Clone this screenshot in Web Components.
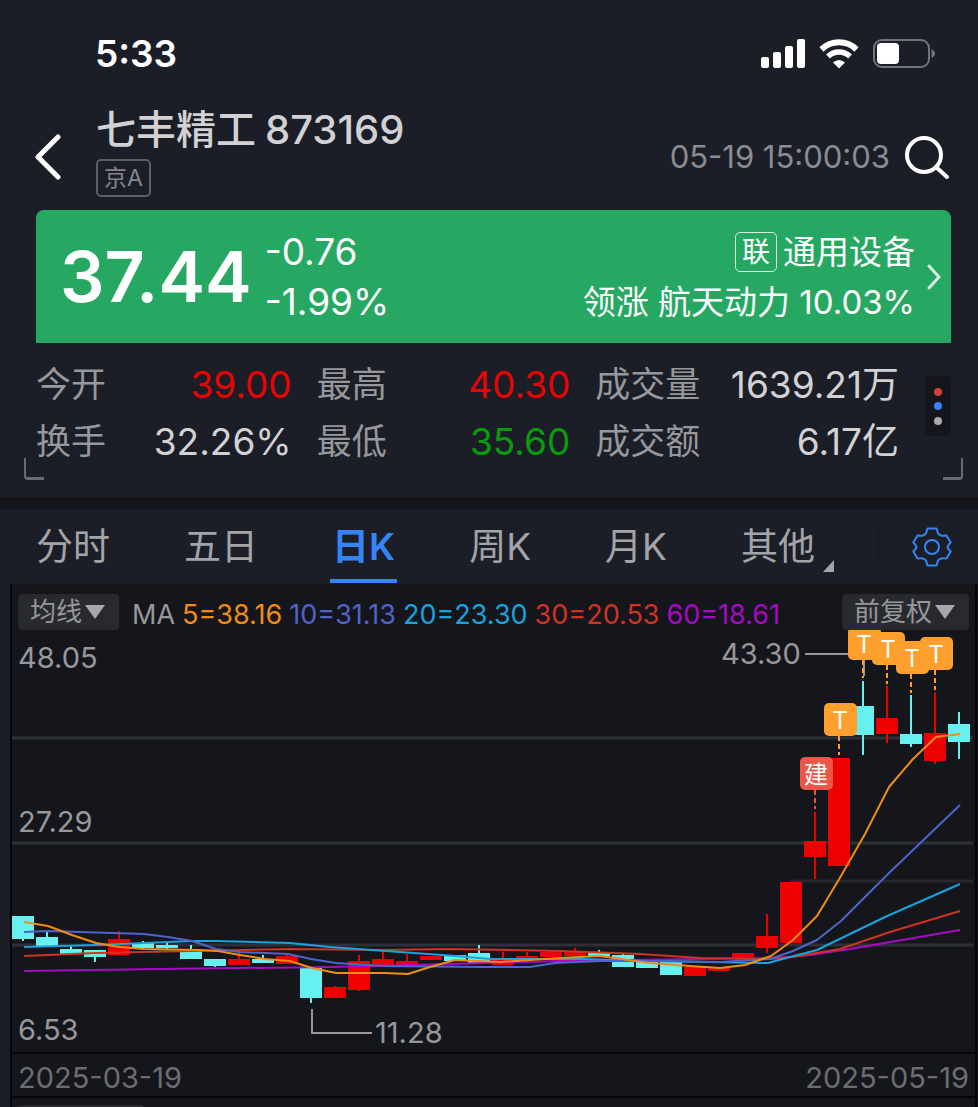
<!DOCTYPE html>
<html lang="zh-CN">
<head>
<meta charset="utf-8">
<meta name="viewport" content="width=device-width, initial-scale=1">
<title>七丰精工 873169</title>
<style>
  html, body {
    margin: 0;
    background: #15161b;
  }

  body {
    --panel: #1b1e27;
    --ink: #15161b;
    --text: #d2d2d5;
    --muted: #97989c;
    --blue: #3485f7;
    color: var(--text);
    font-family: Inter, "Noto Sans CJK SC", sans-serif;
  }
</style>
</head>
<body>

<stock-page>
  <status-bar slot="top" time="5:33"></status-bar>
  <stock-header slot="top" name="七丰精工" code="873169" market="京A" time="05-19 15:00:03"></stock-header>
  <quote-card slot="top" price="37.44" change="-0.76" percent="-1.99%">
    <span slot="sector">通用设备</span>
    <span slot="leader">领涨 航天动力 10.03%</span>
  </quote-card>
  <quote-stats slot="top"></quote-stats>
  <period-tabs></period-tabs>
  <kline-panel></kline-panel>
</stock-page>

<script>
  class StockPage extends HTMLElement {
    constructor() {
      super();
      this.attachShadow({ mode: "open" });
      this.shadowRoot.innerHTML = `
        <style>
        :host{
            display:block;
            overflow:hidden;
        }

        .summary{
            position:relative;
            background:var(--panel);
            padding-bottom:27px;
            margin-bottom:12px;
        }

        /* corner marks over the bottom of the summary */
        .corner{
            position:absolute;
            bottom:17px;
            width:18px;
            height:19px;
            border-bottom:3px solid #6a6b70;
        }

        .corner.left{
            left:24px;
            border-left:2px solid #6a6b70;
            border-bottom-left-radius:4px;
        }

        .corner.right{
            right:15px;
            border-right:2px solid #6a6b70;
            border-bottom-right-radius:4px;
        }
        </style>

        <header class="summary">
            <slot name="top"></slot>
            <span class="corner left"></span>
            <span class="corner right"></span>
        </header>
        <main><slot></slot></main>
      `;
    }
  }

  class StatusBar extends HTMLElement {
    constructor() {
      super();
      this.attachShadow({ mode: "open" });
      this.shadowRoot.innerHTML = `
        <style>
        :host{
            display:flex;
            align-items:center;
            gap:13px;
            padding:30px 42px 0 95px;
            height:48px;
            color:#fff;
        }

        time{
            flex:1;
            font-size:37px;
            line-height:48px;
            font-weight:600;
        }

        svg{
            display:block;
        }
        </style>

        <time></time>
        <svg width="46" height="30" viewBox="0 0 46 30" fill="#fff">
            <rect x="1" y="18" width="8" height="11" rx="2"/>
            <rect x="13" y="13" width="8" height="16" rx="2"/>
            <rect x="25" y="7" width="8" height="22" rx="2"/>
            <rect x="37" y="0" width="8" height="29" rx="2"/>
        </svg>
        <svg width="40" height="30" viewBox="0 0 40 30">
            <path d="M2.500 10.500A25 25 0 0 1 37.500 10.500" fill="none" stroke="#fff" stroke-width="6"/>
            <path d="M9 17.500A16 16 0 0 1 31 17.500" fill="none" stroke="#fff" stroke-width="5.500"/>
            <path d="M20 29.500L14 23.500Q20 18.500 26 23.500Z" fill="#fff"/>
        </svg>
        <svg width="64" height="30" viewBox="0 0 64 30">
            <rect x="2" y="1" width="55" height="27" rx="8" fill="none" stroke="#73747b" stroke-width="2"/>
            <rect x="5" y="4" width="22" height="21" rx="4" fill="#fff"/>
            <path d="M59.500 10Q63 12 63 14.500T59.500 19Z" fill="#73747b"/>
        </svg>
      `;
    }

    connectedCallback() {
      this.shadowRoot.querySelector("time").textContent = this.getAttribute("time");
    }
  }

  class StockHeader extends HTMLElement {
    constructor() {
      super();
      this.attachShadow({ mode: "open" });
      this.shadowRoot.innerHTML = `
        <style>
        :host{
            display:flex;
            align-items:center;
            padding:28px 28px 13px 34px;
        }

        button{
            display:block;
            padding:0;
            border:0;
            background:none;
        }

        button, time{
            margin-top:11px;
        }

        svg{
            display:block;
        }

        .names{
            flex:1;
            padding-left:34px;
        }

        h1{
            display:flex;
            gap:9px;
            margin:0;
            font-size:40px;
            line-height:48px;
            font-weight:500;
        }

        .market{
            display:inline-block;
            margin-top:5px;
            padding:0 6px;
            border:2px solid #5d5f66;
            border-radius:5px;
            color:#85868c;
            font-size:23px;
            line-height:34px;
            vertical-align:top;
        }

        time{
            padding-right:14px;
            color:#8b8c91;
            font-size:31px;
            line-height:40px;
        }
        </style>

        <button aria-label="返回">
            <svg width="28" height="46" viewBox="0 0 28 46"><path d="M24 3L4 23L24 43" fill="none" stroke="#fff" stroke-width="5" stroke-linecap="round" stroke-linejoin="round"/></svg>
        </button>
        <div class="names">
            <h1><span id="name"></span><span id="code"></span></h1>
            <span class="market"></span>
        </div>
        <time></time>
        <button aria-label="搜索">
            <svg width="46" height="46" viewBox="0 0 46 46" fill="none" stroke="#fff"><circle cx="20" cy="21" r="17" stroke-width="4"/><path d="M32 33L43 43" stroke-width="4" stroke-linecap="round"/></svg>
        </button>
      `;
    }

    connectedCallback() {
      const root = this.shadowRoot;
      root.getElementById("name").textContent = this.getAttribute("name");
      root.getElementById("code").textContent = this.getAttribute("code");
      root.querySelector(".market").textContent = this.getAttribute("market");
      root.querySelector("time").textContent = this.getAttribute("time");
    }
  }

  class QuoteCard extends HTMLElement {
    constructor() {
      super();
      this.attachShadow({ mode: "open" });
      this.shadowRoot.innerHTML = `
        <style>
        :host{
            display:flex;
            align-items:center;
            margin:0 27px 0 36px;
            padding:17px 10px 16px 24px;
            border-radius:8px 8px 0 0;
            background:#27a862;
            color:#fff;
        }

        .price{
            font-size:70px;
            line-height:100px;
            font-weight:600;
        }

        .change{
            flex:1;
            padding-left:13px;
            font-size:37px;
            line-height:50px;
        }

        .sector{
            font-size:33px;
            line-height:50px;
            text-align:right;
        }

        .first{
            display:flex;
            justify-content:flex-end;
            align-items:center;
            gap:6px;
        }

        .tag{
            padding:0 6px;
            border:1px solid #d5f0e0;
            border-radius:5px;
            font-size:28px;
            line-height:38px;
        }

        svg{
            display:block;
            padding-left:12px;
        }
        </style>

        <div class="price"></div>
        <div class="change"><div id="change"></div><div id="percent"></div></div>
        <div class="sector">
            <div class="first"><span class="tag">联</span><slot name="sector"></slot></div>
            <slot name="leader"></slot>
        </div>
        <svg width="14" height="26" viewBox="0 0 14 26"><path d="M2 2L12 13L2 24" fill="none" stroke="#d5f0e0" stroke-width="3" stroke-linecap="round"/></svg>
      `;
    }

    connectedCallback() {
      const root = this.shadowRoot;
      root.querySelector(".price").textContent = this.getAttribute("price");
      root.getElementById("change").textContent = this.getAttribute("change");
      root.getElementById("percent").textContent = this.getAttribute("percent");
    }
  }

  class QuoteStats extends HTMLElement {
    constructor() {
      super();
      this._items = [
        ["今开", "39.00", "up"],
        ["最高", "40.30", "up"],
        ["成交量", "1639.21万", ""],
        ["换手", "32.26%", ""],
        ["最低", "35.60", "down"],
        ["成交额", "6.17亿", ""],
      ];
      this.attachShadow({ mode: "open" });
      this.shadowRoot.innerHTML = `
        <style>
        :host{
            display:flex;
            align-items:flex-start;
            gap:26px;
            padding:13px 27px 0 36px;
        }

        dl{
            flex:1;
            display:grid;
            grid-template-columns:256fr 254fr 304fr;
            column-gap:25px;
            margin:0;
        }

        dl div{
            display:flex;
            justify-content:space-between;
            line-height:57px;
        }

        dt{
            color:var(--muted);
            font-size:35px;
        }

        dd{
            margin:0;
            font-size:37px;
        }

        .up{
            color:#e60505;
        }

        .down{
            color:#0a9b0d;
        }

        button{
            display:block;
            margin-top:20px;
            padding:0;
            border:0;
            border-radius:5px;
            background:#15161b;
        }

        svg{
            display:block;
        }
        </style>

        <dl></dl>
        <button aria-label="更多">
            <svg width="26" height="60" viewBox="0 0 26 60">
                <circle cx="13" cy="16" r="4" fill="#d14433"/>
                <circle cx="13" cy="30" r="4" fill="#3485f7"/>
                <circle cx="13" cy="45" r="4" fill="#aaaaae"/>
            </svg>
        </button>
      `;
    }

    connectedCallback() {
      this.shadowRoot.querySelector("dl").innerHTML = this._items
        .map(([label, value, cls]) => `<div><dt>${label}</dt><dd class="${cls}">${value}</dd></div>`)
        .join("");
    }
  }

  class PeriodTabs extends HTMLElement {
    constructor() {
      super();
      this.attachShadow({ mode: "open" });
      this.shadowRoot.innerHTML = `
        <style>
        :host{
            display:flex;
            align-items:center;
            padding:0 26px 0 36px;
            background:var(--panel);
        }

        nav{
            flex:1;
            display:flex;
            justify-content:space-between;
        }

        button{
            position:relative;
            display:block;
            padding:0;
            border:0;
            background:none;
            color:#a3a4a8;
            font:inherit;
            font-size:37px;
            line-height:75px;
        }

        button.active{
            color:var(--blue);
            font-weight:600;
        }

        /* underline of the open tab */
        .active::after{
            content:"";
            position:absolute;
            left:-2px;
            right:-2px;
            bottom:1px;
            height:4px;
            background:var(--blue);
        }

        .more{
            display:flex;
            align-items:flex-end;
            gap:8px;
        }

        .more svg{
            padding-bottom:12px;
        }

        .line{
            width:1px;
            height:34px;
            margin:0 33px 0 44px;
            background:#15161b;
        }

        svg{
            display:block;
        }
        </style>

        <nav>
            <button>分时</button>
            <button>五日</button>
            <button class="active" aria-current="true">日K</button>
            <button>周K</button>
            <button>月K</button>
            <button class="more">其他<svg width="11" height="12" viewBox="0 0 11 12"><path d="M11 0V12H0Z" fill="#a3a4a8"/></svg></button>
        </nav>
        <span class="line"></span>
        <button aria-label="设置">
            <svg width="40" height="40" viewBox="0 0 40 40" fill="none" stroke="#3485f7" stroke-width="2" stroke-linejoin="round">
                <path d="M15.500 1.500H24.500L26 6.500Q28.500 9 31 8.700L34.500 8.500L38.700 15.500Q36 18 35.500 20Q36 22 38.700 24.500L34.500 31.500L31 31.300Q28.500 31 26 33.500L24.500 38.500H15.500L14 33.500Q11.500 31 9 31.300L5.500 31.500L1.300 24.500Q4 22 4.500 20Q4 18 1.300 15.500L5.500 8.500L9 8.700Q11.500 9 14 6.500Z"/>
                <circle cx="20" cy="20" r="7"/>
            </svg>
        </button>
      `;
    }
  }

  class DropDown extends HTMLElement {
    constructor() {
      super();
      this.attachShadow({ mode: "open" });
      this.shadowRoot.innerHTML = `
        <style>
        :host{
            display:inline-grid;
            align-items:center;
        }

        select, svg{
            grid-area:1 / 1;
        }

        select{
            appearance:none;
            margin:0;
            padding:0 36px 0 12px;
            border:0;
            border-radius:4px;
            background:#282a2f;
            color:var(--muted);
            font:inherit;
            font-size:26px;
            line-height:36px;
            height:36px;
        }

        svg{
            justify-self:end;
            margin-right:14px;
            pointer-events:none;
        }
        </style>

        <select><option></option></select>
        <svg width="20" height="14" viewBox="0 0 20 14"><path d="M0 0H20L10 14Z" fill="#a6a7ab"/></svg>
      `;
    }

    connectedCallback() {
      this.shadowRoot.querySelector("select").setAttribute("aria-label", this.getAttribute("label"));
      this.shadowRoot.querySelector("option").textContent = this.getAttribute("value");
    }
  }

  class KlineChart extends HTMLElement {
    constructor() {
      super();

      /* side, open/close top, bottom, high, low */
      this._candles = [
        ["d", 916, 939, 916, 941], ["d", 937, 946, 932, 946], ["d", 949, 954, 946, 954],
        ["d", 950, 957, 950, 962], ["u", 939, 955, 931, 955], ["d", 943, 948, 941, 948],
        ["d", 945, 948, 943, 950], ["d", 951, 959, 945, 959], ["d", 959, 966, 959, 967],
        ["u", 959, 965, 951, 965], ["d", 959, 963, 955, 963], ["u", 956, 964, 955, 964],
        ["d", 968, 998, 968, 1003], ["u", 987, 998, 986, 998], ["u", 961, 990, 955, 991],
        ["u", 959, 967, 951, 967], ["u", 961, 966, 954, 966], ["u", 956, 960, 956, 960],
        ["d", 955, 961, 955, 961], ["d", 953, 963, 945, 963], ["u", 960, 965, 952, 965],
        ["u", 956, 960, 952, 960], ["u", 952, 957, 951, 957], ["u", 952, 956, 948, 956],
        ["d", 952, 956, 950, 956], ["d", 955, 967, 953, 967], ["d", 960, 968, 960, 968],
        ["d", 961, 975, 961, 975], ["u", 967, 976, 967, 976], ["u", 967, 971, 967, 971],
        ["u", 953, 958, 953, 958], ["u", 936, 948, 914, 953], ["u", 882, 943, 882, 943],
        ["u", 841, 857, 812, 879], ["u", 758, 866, 758, 866], ["d", 706, 735, 681, 755],
        ["u", 718, 734, 686, 743], ["d", 734, 744, 695, 747], ["u", 733, 761, 693, 764],
        ["d", 724, 742, 712, 759],
      ];

      this._averages = [
        ["#a80ac4", "24,971 160,969 330,967 450,964 560,961 700,959 775,958 810,955 850,949 960,930"],
        ["#ce3324", "24,956 96,953 190,951 290,949 380,950 450,949 560,951 640,954 700,958 770,959 793,957 840,949 890,932 960,911"],
        ["#19a2dc", "24,947 96,945 192,941 216,941 290,943 330,947 400,952 456,956 490,959 580,959 650,961 768,963 790,957 817,950 885,917 960,884"],
        ["#4f63cb", "24,932 48,931 144,934 168,937 192,941 216,949 240,952 288,954 311,959 336,963 384,966 480,967 530,967 555,963 600,961 660,961 720,962 770,959 793,951 817,940 841,921 889,873 960,805"],
        ["#f08c15", "24,922 48,926 72,935 96,943 120,947 144,949 200,950 218,951 240,955 265,959 290,961 312,968 336,973 384,973 408,974 430,967 455,960 500,962 560,958 600,956 650,963 690,966 720,968 745,965 771,956 793,940 817,916 841,876 865,834 889,787 913,759 936,737 960,734"],
      ];

      /* left, top, text, colour, end of the dotted stem */
      this._marks = [
        [848, 627, "T", "#ff9f2e", 678],
        [872, 632, "T", "#ff9f2e", 684],
        [896, 641, "T", "#ff9f2e", 693],
        [920, 637, "T", "#ff9f2e", 690],
        [824, 703, "T", "#ff9f2e", 755],
        [800, 757, "建", "#ec5747", 809],
      ];

      this.attachShadow({ mode: "open" });
      this.shadowRoot.innerHTML = `
        <style>
        :host{
            display:block;
        }

        svg{
            display:block;
            width:100%;
            height:auto;
        }

        text{
            font-size:29px;
            fill:var(--muted);
        }

        .mark{
            font-size:24px;
            fill:#fff;
            text-anchor:middle;
        }
        </style>
        <svg viewBox="12 630 963 422"></svg>
      `;
    }

    connectedCallback() {
      this.render();
    }

    render() {
      let html = `
        <g stroke="#2e3039" stroke-width="3">
          <path d="M12 738H973M12 843H973M12 945H973"/>
          <path d="M790 881H973" stroke="#27282d"/>
        </g>`;

      this._candles.forEach(([side, top, bottom, high, low], i) => {
        const x = 23 + i * 24;
        const color = side === "u" ? "#ec0000" : "#66f0f0";
        html += `
          <rect x="${x - 11}" y="${top}" width="22" height="${bottom - top}" fill="${color}"/>
          <rect x="${x - 1}" y="${high}" width="2" height="${low - high}" fill="${color}"/>`;
      });

      this._averages.forEach(([color, points]) => {
        html += `<polyline points="${points}" fill="none" stroke="${color}" stroke-width="2" stroke-linejoin="round"/>`;
      });

      html += `
        <g fill="none" stroke="#97989c" stroke-width="2">
          <path d="M805 654H864V676"/>
          <path d="M312 1009V1033H372"/>
        </g>`;

      this._marks.forEach(([x, y, text, color, end]) => {
        html += `
          <path d="M${x + 15} ${y + 33}V${end}" stroke="${color}" stroke-width="2" stroke-dasharray="5 3"/>
          <rect x="${x}" y="${y}" width="33" height="33" rx="5" fill="${color}"/>
          <text class="mark" x="${x + 16}" y="${y + 26}">${text}</text>`;
      });

      html += `
        <text x="18" y="668">48.05</text>
        <text x="18" y="832">27.29</text>
        <text x="18" y="1040">6.53</text>
        <text x="721" y="664">43.30</text>
        <text x="375" y="1043">11.28</text>`;

      this.shadowRoot.querySelector("svg").innerHTML = html;
    }
  }

  class KlinePanel extends HTMLElement {
    constructor() {
      super();
      this.attachShadow({ mode: "open" });
      this.shadowRoot.innerHTML = `
        <style>
        :host{
            display:block;
            padding:0 1px 0 10px;
            background:linear-gradient(90deg, var(--panel) 10px, var(--ink) 10px);
        }

        .frame{
            padding-top:10px;
            border:solid #050507;
            border-width:0 2px;
        }

        .legend{
            display:flex;
            align-items:center;
            gap:7px;
            padding:0 6px;
            font-size:27px;
            line-height:30px;
        }

        .legend span{
            padding-top:6px;
        }

        .legend drop-down:first-child{
            margin-right:6px;
        }

        .legend drop-down:last-child{
            margin-left:auto;
        }

        .ma{
            color:var(--muted);
        }

        .dates{
            display:flex;
            justify-content:space-between;
            padding:6px 6px 0;
            border:solid #050507;
            border-width:2px 0;
            color:#6c6d72;
            font-size:29px;
            line-height:36px;
        }

        /* top edge of the next indicator picker */
        .next{
            width:126px;
            height:3px;
            margin:7px 6px 0;
            border-radius:4px 4px 0 0;
            background:#282a2f;
        }
        </style>

        <div class="frame">
            <div class="legend">
                <drop-down label="指标" value="均线"></drop-down>
                <span class="ma">MA</span>
                <span style="color:#f08c15">5=38.16</span>
                <span style="color:#4f63cb">10=31.13</span>
                <span style="color:#19a2dc">20=23.30</span>
                <span style="color:#ce3324">30=20.53</span>
                <span style="color:#a80ac4">60=18.61</span>
                <drop-down label="复权" value="前复权"></drop-down>
            </div>
            <kline-chart></kline-chart>
            <div class="dates"><time>2025-03-19</time><time>2025-05-19</time></div>
            <div class="next"></div>
        </div>
      `;
    }
  }

  customElements.define("stock-page", StockPage);
  customElements.define("status-bar", StatusBar);
  customElements.define("stock-header", StockHeader);
  customElements.define("quote-card", QuoteCard);
  customElements.define("quote-stats", QuoteStats);
  customElements.define("period-tabs", PeriodTabs);
  customElements.define("drop-down", DropDown);
  customElements.define("kline-chart", KlineChart);
  customElements.define("kline-panel", KlinePanel);
</script>
</body>
</html>
